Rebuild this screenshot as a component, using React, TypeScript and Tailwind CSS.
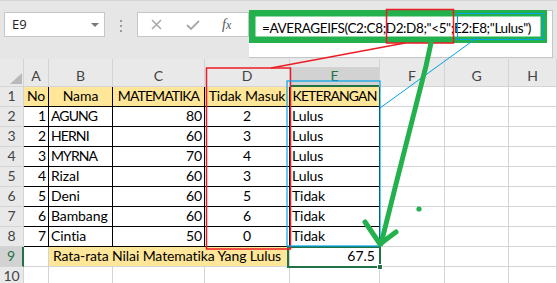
import React from "react";

const W = [24, 25, 64, 92, 85, 90, 65, 64, 48];
const LETTERS = ["A", "B", "C", "D", "E", "F", "G", "H"];

const rows: [number, string, number, number, string][] = [
  [1, "AGUNG", 80, 2, "Lulus"],
  [2, "HERNI", 60, 3, "Lulus"],
  [3, "MYRNA", 70, 4, "Lulus"],
  [4, "Rizal", 60, 3, "Lulus"],
  [5, "Deni", 60, 5, "Tidak"],
  [6, "Bambang", 60, 6, "Tidak"],
  [7, "Cintia", 50, 0, "Tidak"],
];

const cellFont = "font-['Lato',sans-serif] text-[14px] leading-[21px] text-black";

function RowHead({ n, sel }: { n: number; sel?: boolean }) {
  return (
    <div
      className={
        "w-[24px] shrink-0 h-full border-b border-[#d4d4d4] flex items-end justify-center font-['Lato',sans-serif] text-[14px] leading-[21px] " +
        (sel
          ? "bg-[#d2d2d2] border-r-2 border-r-[#217346] text-[#217346]"
          : "bg-[#e9e9e9] border-r border-r-[#d4d4d4] text-[#444]")
      }
    >
      {n}
    </div>
  );
}

function Empty({ w }: { w: number }) {
  return <div className="shrink-0 h-full border-r border-b border-[#d4d4d4] bg-white" style={{ width: w }} />;
}

function T({
  w,
  children,
  align,
  head,
  caps,
}: {
  w: number;
  children: React.ReactNode;
  align: "l" | "c" | "r";
  head?: boolean;
  caps?: boolean;
}) {
  const a = align === "l" ? "justify-start pl-[2px]" : align === "c" ? "justify-center" : "justify-end pr-[2px]";
  return (
    <div
      className={
        "shrink-0 h-full border-r border-b border-black flex items-end whitespace-nowrap overflow-hidden " +
        a +
        " " +
        cellFont +
        (head ? " bg-[#ffe699]" : " bg-white") +
        (caps ? " tracking-[-0.9px]" : " tracking-[-0.1px]")
      }
      style={{ width: w }}
    >
      {children}
    </div>
  );
}

const isCaps = (s: string | number) => typeof s === "string" && s === s.toUpperCase();

export default function App() {
  return (
    <div className="relative w-[557px] h-[283px] overflow-hidden bg-white">
      {/* Top bar */}
      <div className="h-[59px] bg-[#e6e6e6] border-t border-[#d4d4d4] flex items-start">
        <div className="ml-[4px] mt-[11px] w-[101px] h-[25px] bg-white border border-[#c6c6c6] flex items-center justify-between pl-[7px] pr-[5px]">
          <span className="font-['Open_Sans',sans-serif] text-[13px] text-[#222] leading-none">E9</span>
          <svg width="8" height="4" viewBox="0 0 8 4">
            <path d="M0 0 L8 0 L4 4 Z" fill="#777" />
          </svg>
        </div>
        <div className="w-[32px] mt-[19px] flex flex-col items-center gap-[3px]">
          <div className="w-[2px] h-[2px] bg-[#9a9a9a]" />
          <div className="w-[2px] h-[2px] bg-[#9a9a9a]" />
          <div className="w-[2px] h-[2px] bg-[#9a9a9a]" />
        </div>
        <div className="mt-[11px] w-[112px] h-[25px] bg-white border border-[#c6c6c6] flex items-center">
          <svg className="ml-[13px]" width="11" height="11" viewBox="0 0 11 11">
            <path d="M1 1 L10 10 M10 1 L1 10" stroke="#a8a8a8" strokeWidth="1.5" />
          </svg>
          <svg className="ml-[24px]" width="14" height="10" viewBox="0 0 14 10">
            <path d="M1 5 L5 9 L13 1" stroke="#a8a8a8" strokeWidth="1.8" fill="none" />
          </svg>
          <span className="ml-[22px] font-['Liberation_Serif',serif] italic text-[14px] text-[#555] leading-none">
            f<span className="text-[12px]">x</span>
          </span>
        </div>
        <div className="mt-[9px] w-[304px] h-[48px] bg-white border border-[#c6c6c6] border-l-0">
          <div className="pl-[13px] pt-[7px] font-['Lato',sans-serif] text-[13.5px] tracking-[-0.38px] leading-[20px] text-black whitespace-nowrap">
            =AVERAGEIFS(C2:C8;D2:D8;"&lt;5";E2:E8;"Lulus")
          </div>
        </div>
      </div>

      {/* Column headers */}
      <div className="flex h-[28px]">
        <div className="w-[24px] shrink-0 h-full bg-[#e9e9e9] border-r border-b border-[#d4d4d4] relative">
          <svg className="absolute left-[10px] top-[14px]" width="12" height="11" viewBox="0 0 12 11">
            <path d="M12 0 L12 11 L0 11 Z" fill="#b9b9b9" />
          </svg>
        </div>
        {LETTERS.map((L, i) =>
          L === "E" ? (
            <div key={L} className="shrink-0 h-full flex flex-col border-r border-[#d4d4d4] bg-[#e9e9e9]" style={{ width: W[i + 1] }}>
              <div className="h-[8px]" />
              <div className="flex-1 bg-[#d2d2d2] border-b-2 border-[#217346] flex items-end justify-center font-['Lato',sans-serif] text-[14px] leading-[18px] text-[#217346]">
                E
              </div>
            </div>
          ) : (
            <div
              key={L}
              className="shrink-0 h-full bg-[#e9e9e9] border-r border-b border-[#d4d4d4] flex items-end justify-center font-['Lato',sans-serif] text-[14px] leading-[21px] text-[#444]"
              style={{ width: W[i + 1] }}
            >
              {L}
            </div>
          )
        )}
      </div>

      {/* Row 1 */}
      <div className="flex h-[20px]">
        <RowHead n={1} />
        <T w={W[1]} align="c" head>No</T>
        <T w={W[2]} align="c" head>Nama</T>
        <T w={W[3]} align="c" head caps>MATEMATIKA</T>
        <T w={W[4]} align="c" head>Tidak Masuk</T>
        <T w={W[5]} align="c" head caps>KETERANGAN</T>
        <Empty w={W[6]} />
        <Empty w={W[7]} />
        <Empty w={W[8]} />
      </div>

      {rows.map((r, idx) => (
        <div key={idx} className="flex h-[20px]">
          <RowHead n={idx + 2} />
          <T w={W[1]} align="r">{r[0]}</T>
          <T w={W[2]} align="l" caps={isCaps(r[1])}>{r[1]}</T>
          <T w={W[3]} align="r">{r[2]}</T>
          <T w={W[4]} align="c">{r[3]}</T>
          <T w={W[5]} align="l">{r[4]}</T>
          <Empty w={W[6]} />
          <Empty w={W[7]} />
          <Empty w={W[8]} />
        </div>
      ))}

      {/* Row 9 */}
      <div className="flex h-[20px]">
        <RowHead n={9} sel />
        <Empty w={W[1]} />
        <div
          className={"shrink-0 h-full bg-[#ffe699] border-r border-b border-[#d4d4d4] flex items-end pl-[4px] whitespace-nowrap tracking-[-0.1px] " + cellFont}
          style={{ width: W[2] + W[3] + W[4] }}
        >
          Rata-rata Nilai Matematika Yang Lulus
        </div>
        <div
          className={"shrink-0 h-full bg-white border-r border-b border-[#d4d4d4] flex items-end justify-end pr-[4px] " + cellFont}
          style={{ width: W[5] }}
        >
          67.5
        </div>
        <Empty w={W[6]} />
        <Empty w={W[7]} />
        <Empty w={W[8]} />
      </div>

      {/* Row 10 */}
      <div className="flex h-[20px]">
        <RowHead n={10} />
        {W.slice(1).map((w, i) => (
          <Empty key={i} w={w} />
        ))}
      </div>

      {/* Selection on E9 */}
      <div className="absolute left-[287px] top-[246px] w-[94px] h-[22px] border-2 border-[#217346]" />
      <div className="absolute left-[377px] top-[264px] w-[6px] h-[6px] bg-[#217346] border border-white" />

      {/* Annotations */}
      <svg className="absolute left-0 top-0 pointer-events-none" width="557" height="283" viewBox="0 0 557 283">
        <rect x="252.25" y="13.25" width="291.5" height="26.5" fill="none" stroke="#22b14c" strokeWidth="6.5" />
        <rect x="386.5" y="9.5" width="67" height="33.5" fill="none" stroke="#ed1c24" strokeWidth="1.5" />
        <rect x="457.5" y="13.5" width="85" height="26" fill="none" stroke="#00a2e8" strokeWidth="1" />
        <line x1="271" y1="68" x2="405" y2="43" stroke="#ed1c24" strokeWidth="1.3" />
        <rect x="206.5" y="68" width="84" height="181" fill="none" stroke="#ed1c24" strokeWidth="1.5" />
        <rect x="287" y="81" width="93" height="165" fill="none" stroke="#00a2e8" strokeWidth="1.2" />
        <line x1="380" y1="108" x2="478" y2="37" stroke="#00a2e8" strokeWidth="1" />
        <path
          d="M431 43 L426 66 L397 180 L381 244"
          fill="none"
          stroke="#22b14c"
          strokeWidth="5"
          strokeLinecap="round"
          strokeLinejoin="round"
        />
        <path d="M365 222 L380 244 L396 232" fill="none" stroke="#22b14c" strokeWidth="5" strokeLinecap="round" strokeLinejoin="round" />
        <circle cx="419" cy="209" r="2.6" fill="#22b14c" />
      </svg>
    </div>
  );
}
